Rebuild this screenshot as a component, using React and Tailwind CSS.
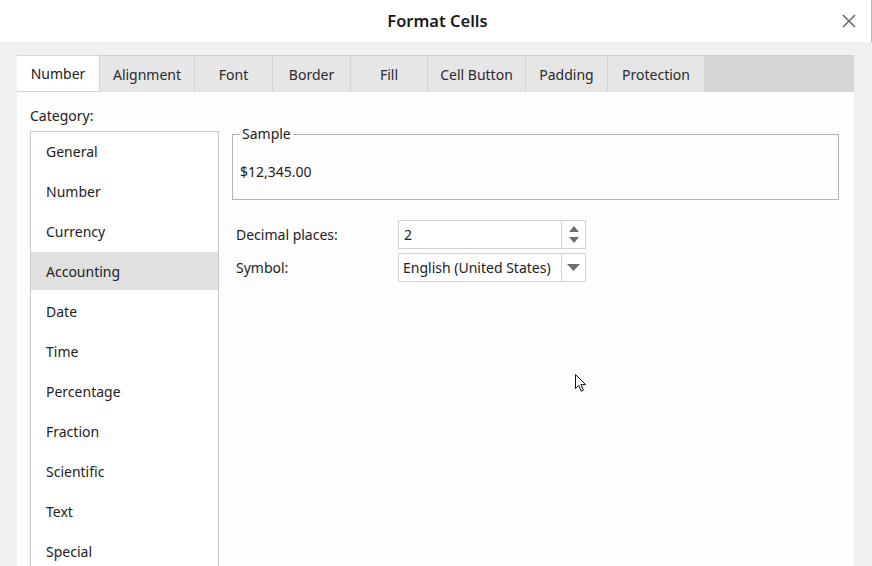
import React from "react";

const tabs = [
  { label: "Number", w: "w-[82px]", active: true },
  { label: "Alignment", w: "w-[95px]" },
  { label: "Font", w: "w-[78px]" },
  { label: "Border", w: "w-[78px]" },
  { label: "Fill", w: "w-[77px]" },
  { label: "Cell Button", w: "w-[98px]" },
  { label: "Padding", w: "w-[82px]" },
  { label: "Protection", w: "w-[97px]" },
];

const categories = [
  "General",
  "Number",
  "Currency",
  "Accounting",
  "Date",
  "Time",
  "Percentage",
  "Fraction",
  "Scientific",
  "Text",
  "Special",
];

export default function App() {
  return (
    <div
      className="w-[872px] h-[566px] overflow-hidden bg-[#f0f0f3] relative text-[#222222] flex flex-col"
      style={{ fontFamily: '"Noto Sans", "Open Sans", sans-serif' }}
    >
      {/* title bar */}
      <div className="h-[42px] shrink-0 bg-white grid grid-cols-[1fr_auto_1fr] items-center border-r border-[#b8b8b8]">
        <div />
        <div className="text-[16.5px] font-semibold text-[#1a1a1a] leading-none pl-[4px]">Format Cells</div>
        <div className="flex justify-end pr-[15px]">
          <svg width="14" height="14" viewBox="0 0 14 14">
            <path d="M1 1 L13 13 M13 1 L1 13" stroke="#6a6a6a" strokeWidth="1.6" fill="none" />
          </svg>
        </div>
      </div>

      <div className="flex-1 flex flex-col pl-[17px] pr-[18px] pt-[13px]">
        {/* tabs */}
        <div className="h-[37px] shrink-0 flex bg-[#d6d6d4] border-t border-[#d0d0d0]">
          {tabs.map((t) => (
            <div
              key={t.label}
              className={
                t.w +
                " h-full flex items-center justify-center text-[14px] " +
                (t.active
                  ? "bg-white border-t border-[#d8d8d8] -mt-px text-[#1a1a1a]"
                  : "bg-[#e6e6e6] border-l border-[#d2d2d2] text-[#2a2a2a]")
              }
            >
              {t.label}
            </div>
          ))}
        </div>

        {/* content */}
        <div className="flex-1 bg-[#fdfdfd] flex pl-[13px] pr-[15px] pt-[14px] gap-[13px]">
          {/* left */}
          <div className="w-[189px] shrink-0 flex flex-col">
            <div className="text-[14px] leading-[20px] h-[25px]">Category:</div>
            <div className="flex-1 border border-[#cacaca] bg-white flex flex-col">
              {categories.map((c) => (
                <div
                  key={c}
                  className={
                    "h-[38px] mb-[2px] shrink-0 flex items-center pl-[15px] text-[14px] " +
                    (c === "Accounting" ? "bg-[#e0e0e0]" : "")
                  }
                >
                  {c}
                </div>
              ))}
            </div>
          </div>

          {/* right */}
          <div className="flex-1 flex flex-col pt-[28px]">
            <div className="relative h-[66px] border border-[#b4b4b4] flex items-center pl-[7px] pt-[8px]">
              <span className="absolute -top-[11px] left-[7px] bg-[#fdfdfd] px-[2px] text-[14px] leading-[20px]">
                Sample
              </span>
              <span className="text-[14px]">$12,345.00</span>
            </div>

            <div className="mt-[20px] flex flex-col gap-[4px]">
              <div className="flex items-center">
                <div className="w-[166px] pl-[4px] text-[14px]">Decimal places:</div>
                <div className="w-[188px] h-[29px] border border-[#d2d2d2] bg-white flex">
                  <div className="flex-1 flex items-center pl-[5px] text-[14px]">2</div>
                  <div className="w-[24px] border-l border-[#d2d2d2] flex flex-col items-center justify-center gap-[5px]">
                    <svg width="10" height="6" viewBox="0 0 10 6">
                      <path d="M0 6 L5 0 L10 6 Z" fill="#6e6e6e" />
                    </svg>
                    <svg width="10" height="6" viewBox="0 0 10 6">
                      <path d="M0 0 L5 6 L10 0 Z" fill="#6e6e6e" />
                    </svg>
                  </div>
                </div>
              </div>
              <div className="flex items-center">
                <div className="w-[166px] pl-[4px] text-[14px]">Symbol:</div>
                <div className="w-[188px] h-[29px] border border-[#d2d2d2] bg-white flex">
                  <div className="flex-1 flex items-center pl-[4px] text-[14px]">English (United States)</div>
                  <div className="w-[24px] border-l border-[#d2d2d2] flex items-center justify-center">
                    <svg width="13" height="7" viewBox="0 0 13 7">
                      <path d="M0 0 L6.5 7 L13 0 Z" fill="#6e6e6e" />
                    </svg>
                  </div>
                </div>
              </div>
            </div>
          </div>
        </div>
      </div>

      {/* mouse cursor */}
      <svg className="absolute left-[575px] top-[374px]" width="13" height="20" viewBox="0 0 13 20">
        <path
          d="M0.5 0.5 L0.5 14.5 L3.8 11.4 L6.2 17.2 L8.4 16.3 L6 10.6 L10.6 10.6 Z"
          fill="#ffffff"
          stroke="#111111"
          strokeWidth="1"
          strokeLinejoin="miter"
        />
      </svg>
    </div>
  );
}
